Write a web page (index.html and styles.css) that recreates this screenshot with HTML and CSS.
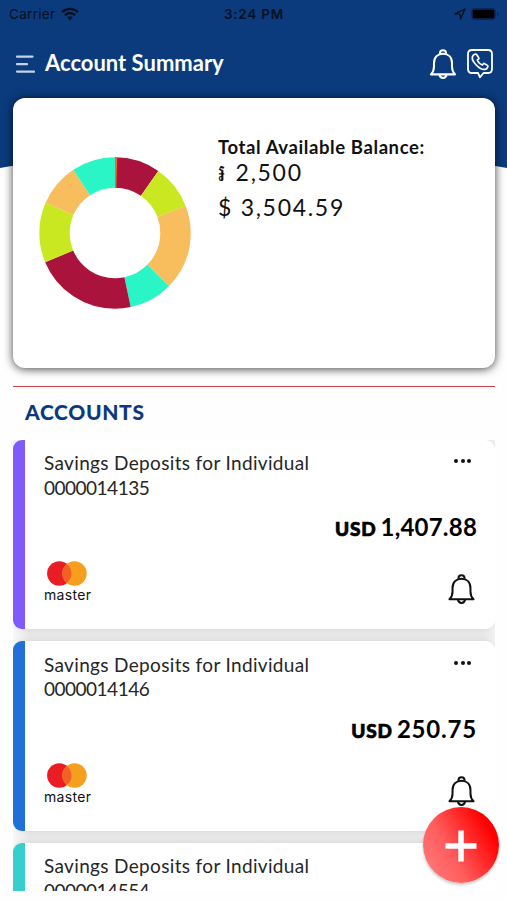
FILE: index.html
```html
<!DOCTYPE html>
<html lang="en">
<head>
    <meta charset="UTF-8">
    <title>Account Summary</title>
    <link rel="stylesheet" href="styles.css">
</head>
<body>
    <!-- shared icons -->
    <svg class="sprite" width="0" height="0">
        <symbol id="bell" viewBox="0 0 28 32">
            <g fill="none" stroke="currentColor" stroke-width="2.1" stroke-linejoin="round">
                <path d="M10.8 4.8C10.8 2.7 12.2 1.3 14 1.3s3.2 1.4 3.2 3.5"/>
                <path d="M1.5 26.2c2.400-2.300 3.200-4.400 3.200-8.200v-3.500C4.700 8.300 8.600 4.800 14 4.800s9.300 3.500 9.300 9.700V18c0 3.800.8 5.900 3.200 8.200z"/>
                <path d="M10.300 26.300c.3 2.500 1.700 3.700 3.700 3.700s3.400-1.200 3.700-3.700"/>
            </g>
        </symbol>
        <symbol id="mastercard" viewBox="0 0 40 25">
            <circle cx="12.300" cy="12.500" r="12.200" fill="#ea1d25"/>
            <circle cx="27.500" cy="12.500" r="12.200" fill="#f69e1e"/>
            <path d="M19.900 2.950a12.200 12.200 0 0 1 0 19.100a12.200 12.200 0 0 1 0-19.100z" fill="#f26024"/>
        </symbol>
    </svg>

    <div class="screen">
        <header class="header">
            <svg class="header-bg" viewBox="0 0 507 169" preserveAspectRatio="none">
                <path d="M0 0H507V168Q253.500 122 0 168Z" fill="#0b3b7d"/>
            </svg>
            <div class="status-bar">
                <div class="carrier">
                    <span>Carrier</span>
                    <svg width="18" height="14" viewBox="0 0 18 14">
                        <g fill="none" stroke="#05101f" stroke-width="2.300">
                            <path d="M1 5.200a11.500 11.500 0 0 1 16 0"/>
                            <path d="M3.900 8.300a7.300 7.300 0 0 1 10.200 0"/>
                        </g>
                        <path d="M9 13.500L6.200 10.500a4 4 0 0 1 5.600 0z" fill="#05101f"/>
                    </svg>
                </div>
                <span class="time">3:24 PM</span>
                <div class="battery">
                    <svg width="12" height="12" viewBox="0 0 12 12">
                        <path d="M1 5.800L11 1L6.500 11L5.900 6.100z" fill="none" stroke="#05101f" stroke-width="1.300" stroke-linejoin="round"/>
                    </svg>
                    <svg width="28" height="12" viewBox="0 0 28 12">
                        <rect x=".5" y=".5" width="24" height="11" rx="3" fill="none" stroke="#08295a"/>
                        <rect x="1.500" y="1.500" width="22" height="9" rx="1.500" fill="#000"/>
                        <path d="M26 4v4q1.500-.5 1.500-2T26 4z" fill="#08295a"/>
                    </svg>
                </div>
            </div>
            <div class="title-bar">
                <svg class="menu" width="20" height="18" viewBox="0 0 20 18">
                    <path d="M2 1.700H17.500M2 9.200H12M2 16.600H19" stroke="#c3d3ea" stroke-width="2.200" stroke-linecap="round"/>
                </svg>
                <h1>Account Summary</h1>
                <svg class="header-bell" width="28" height="31"><use href="#bell"/></svg>
                <svg class="call" width="26" height="30" viewBox="0 0 26 30">
                    <g fill="none" stroke="#fff" stroke-width="1.800" stroke-linejoin="round">
                        <path d="M5 1h16q4 0 4 4v15q0 4-4 4h-4.500L13 28.300L11 24H5q-4 0-4-4V5q0-4 4-4z"/>
                        <path d="M6.200 6.200c-1.800 2.200-.6 6 3 9.800s7.700 5.200 10.400 3.700l1.200-1.800c.3-.6.100-1.100-.4-1.500l-2.700-1.700c-.6-.4-1.100-.3-1.500.3l-.8 1c-2-.7-4.200-2.800-5.100-5l1.100-.8c.6-.4.700-.9.300-1.500L9.600 5.600c-.4-.6-1-.7-1.600-.4z" stroke-width="1.700"/>
                    </g>
                </svg>
            </div>
        </header>

        <section class="balance-card">
            <svg class="donut" width="152" height="152" viewBox="0 0 152 152">
                <g transform="rotate(-90 76 76)" fill="none" stroke-width="30.400">
                    <circle cx="76" cy="76" r="60.500" pathLength="360" stroke="#aa143c" stroke-dasharray="34.900 325.100"/>
                    <circle cx="76" cy="76" r="60.500" pathLength="360" stroke="#c9e821" stroke-dasharray="34.100 325.900" stroke-dashoffset="-34.900"/>
                    <circle cx="76" cy="76" r="60.500" pathLength="360" stroke="#f8bd5c" stroke-dasharray="65.600 294.400" stroke-dashoffset="-69"/>
                    <circle cx="76" cy="76" r="60.500" pathLength="360" stroke="#29f5c6" stroke-dasharray="33.400 326.600" stroke-dashoffset="-134.600"/>
                    <circle cx="76" cy="76" r="60.500" pathLength="360" stroke="#aa143c" stroke-dasharray="79.300 280.700" stroke-dashoffset="-168"/>
                    <circle cx="76" cy="76" r="60.500" pathLength="360" stroke="#c9e821" stroke-dasharray="46.200 313.800" stroke-dashoffset="-247.300"/>
                    <circle cx="76" cy="76" r="60.500" pathLength="360" stroke="#f8bd5c" stroke-dasharray="33.100 326.900" stroke-dashoffset="-293.500"/>
                    <circle cx="76" cy="76" r="60.500" pathLength="360" stroke="#29f5c6" stroke-dasharray="33.400 326.600" stroke-dashoffset="-326.600"/>
                    <circle cx="76" cy="76" r="60.500" pathLength="360" stroke="#ee6530" stroke-dasharray="1.800 358.200"/>
                </g>
            </svg>
            <div class="balance">
                <h2>Total Available Balance:</h2>
                <p><span class="riel">៛</span> 2,500</p>
                <p>$ 3,504.59</p>
            </div>
        </section>

        <h2 class="accounts-title">ACCOUNTS</h2>

        <div class="accounts">
            <article class="account purple">
                <div class="account-top">
                    <div class="account-name">Savings Deposits for Individual<br><span class="number">0000014135</span></div>
                    <div class="dots"><i></i><i></i><i></i></div>
                </div>
                <div class="amount"><span class="usd">USD</span> <span class="value">1,407.88</span></div>
                <div class="account-bottom">
                    <div class="brand">
                        <svg width="40" height="25"><use href="#mastercard"/></svg>
                        <span>master</span>
                    </div>
                    <svg class="bell" width="27" height="31"><use href="#bell"/></svg>
                </div>
            </article>

            <article class="account blue">
                <div class="account-top">
                    <div class="account-name">Savings Deposits for Individual<br><span class="number">0000014146</span></div>
                    <div class="dots"><i></i><i></i><i></i></div>
                </div>
                <div class="amount"><span class="usd">USD</span> <span class="value">250.75</span></div>
                <div class="account-bottom">
                    <div class="brand">
                        <svg width="40" height="25"><use href="#mastercard"/></svg>
                        <span>master</span>
                    </div>
                    <svg class="bell" width="27" height="31"><use href="#bell"/></svg>
                </div>
            </article>

            <article class="account teal">
                <div class="account-top">
                    <div class="account-name">Savings Deposits for Individual<br><span class="number">0000014554</span></div>
                </div>
            </article>
        </div>

        <button class="add" aria-label="Add">
            <svg width="32" height="32" viewBox="0 0 32 32">
                <path d="M16 .5V31.500M.5 16H31.500" stroke="#fff" stroke-width="5.500"/>
            </svg>
        </button>
    </div>
</body>
</html>
```
FILE: styles.css
```css
* {
    box-sizing: border-box;
}

body {
    margin: 0;
    background-color: #fefefe;
    font-family: Lato, "Liberation Sans", sans-serif;
    color: #111;
}

h1, h2, p {
    margin: 0;
}

.sprite {
    position: absolute;
}

.screen {
    position: relative;
    width: 507px;
    height: 900px;
    overflow: hidden;
}

/* header */
.header {
    position: relative;
    height: 98px;
}

.header-bg {
    position: absolute;
    top: 0;
    left: 0;
    width: 507px;
    height: 169px;
    z-index: -1;
}

.status-bar {
    display: grid;
    grid-template-columns: 1fr auto 1fr;
    align-items: center;
    height: 28px;
    padding: 0 8px 0 9px;
    font-family: Inter, sans-serif;
    font-size: 13.5px;
    color: #05101f;
}

.carrier {
    display: flex;
    align-items: center;
    gap: 6px;
    letter-spacing: 0.3px;
}

.time {
    font-weight: 600;
    letter-spacing: 0.8px;
}

.battery {
    display: flex;
    align-items: center;
    justify-content: flex-end;
    gap: 5px;
}

.title-bar {
    display: flex;
    align-items: center;
    height: 72px;
    padding: 0 14px 0 15px;
    color: #fff;
}

.menu {
    margin-right: 10px;
}

.title-bar h1 {
    flex: 1;
    padding-bottom: 3px;
    font-size: 22px;
    font-weight: 700;
}

.header-bell {
    margin-right: 10px;
}

/* balance card */
.balance-card {
    display: flex;
    height: 269.500px;
    margin: 0 12px 0 13px;
    padding: 0 26px;
    background-color: #fff;
    border-radius: 12px;
    box-shadow: 0 1px 10px rgba(0, 0, 0, 0.75);
}

.donut {
    margin: 59px 27px 0 0;
}

.balance {
    padding-top: 37px;
}

.balance h2 {
    font-size: 18.5px;
    font-weight: 700;
    line-height: 24px;
    letter-spacing: 0.6px;
}

.balance p {
    height: 31px;
    font-size: 23px;
    line-height: 34px;
    letter-spacing: 1.7px;
}

.balance h2 + p {
    line-height: 27px;
}

.riel {
    margin-right: 2px;
    font-size: 24px;
    line-height: 1;
    letter-spacing: 0;
}

/* accounts */
.accounts-title {
    height: 54px;
    margin: 18px 12px 0 13px;
    padding: 12px 12px 0;
    border-top: 1.500px solid #cf3f49;
    color: #0c397c;
    font-size: 21px;
    font-weight: 900;
    line-height: 26px;
    letter-spacing: 0.65px;
}

.accounts {
    display: flex;
    flex-direction: column;
    gap: 12px;
    height: 451.500px;
    margin: 0 12px 0 13px;
    overflow: hidden;
    background: linear-gradient(to right, #f8f8f8, #e7e7e7 16px, #e7e7e7 470px, #f2f2f2);
}

.account {
    flex: none;
    height: 189.500px;
    padding: 11.500px 18px 0 19px;
    background-color: #fff;
    border-left: 12px solid #7d5cfb;
    border-radius: 9px;
    box-shadow: 0 0 5px rgba(0, 0, 0, 0.08);
}

.blue {
    border-left-color: #226fd9;
}

.teal {
    border-left-color: #35d0cd;
}

.account-top {
    display: flex;
    justify-content: space-between;
}

.account-name {
    font-size: 19px;
    line-height: 24.500px;
    letter-spacing: 0.34px;
    color: #262626;
}

.number {
    letter-spacing: -0.5px;
}

.dots {
    display: flex;
    gap: 2.500px;
    padding: 8px 6px 0 0;
}

.dots i {
    width: 4px;
    height: 4px;
    border-radius: 50%;
    background-color: #111;
}

.amount {
    margin-top: 12px;
    text-align: right;
    line-height: 30px;
    color: #000;
}

.usd {
    font-size: 19px;
    font-weight: 900;
    letter-spacing: 0.8px;
    -webkit-text-stroke: 0.7px #000;
}

.value {
    font-size: 24px;
    font-weight: 700;
    letter-spacing: 0.2px;
}

.blue .value {
    letter-spacing: 0.8px;
}

.account-bottom {
    display: flex;
    justify-content: space-between;
    margin-top: 16px;
}

.brand {
    display: flex;
    flex-direction: column;
    font-family: Inter, sans-serif;
    font-size: 14px;
    line-height: 16px;
    letter-spacing: 0.35px;
}

.brand svg {
    margin: 0 0 1px 3px;
}

.bell {
    margin: 13px 2px 0 0;
}

/* floating button */
.add {
    position: absolute;
    top: 807px;
    left: 422.500px;
    display: flex;
    align-items: center;
    justify-content: center;
    width: 76px;
    height: 76px;
    padding: 2px 0 0;
    border: 0;
    border-radius: 50%;
    background: linear-gradient(60deg, #ff7c7c 5%, #ff5c5c 38%, #ff0000 82%);
    box-shadow: 0 2px 3px rgba(0, 0, 0, 0.22);
}
```
